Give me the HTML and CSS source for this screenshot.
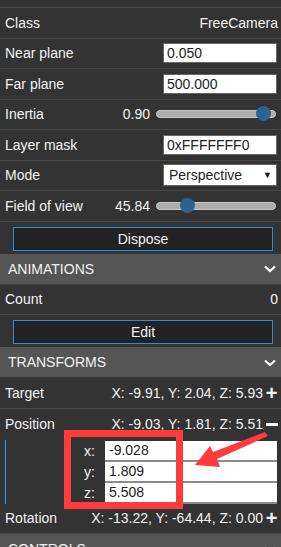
FILE: index.html
```html
<!DOCTYPE html>
<html lang="en">
<head>
  <meta charset="UTF-8">
  <title>Camera Inspector</title>
  <link rel="stylesheet" href="styles.css">
</head>
<body>
  <div class="pane">
    <div class="row top-strip"></div>

    <div class="row">
      <span class="label">Class</span>
      <span class="value">FreeCamera</span>
    </div>
    <div class="row">
      <span class="label">Near plane</span>
      <input class="text-input" type="text" value="0.050">
    </div>
    <div class="row">
      <span class="label">Far plane</span>
      <input class="text-input" type="text" value="500.000">
    </div>
    <div class="row">
      <span class="label">Inertia</span>
      <div class="slider-group">
        <span class="slider-value">0.90</span>
        <div class="slider"><div class="thumb" style="left:90%"></div></div>
      </div>
    </div>
    <div class="row">
      <span class="label">Layer mask</span>
      <input class="text-input" type="text" value="0xFFFFFFF0">
    </div>
    <div class="row">
      <span class="label">Mode</span>
      <div class="select">Perspective <span class="caret">&#9660;</span></div>
    </div>
    <div class="row">
      <span class="label">Field of view</span>
      <div class="slider-group">
        <span class="slider-value">45.84</span>
        <div class="slider"><div class="thumb" style="left:25.5%"></div></div>
      </div>
    </div>
    <div class="button-row">
      <div class="btn">Dispose</div>
    </div>

    <div class="header">
      <span>ANIMATIONS</span>
      <svg class="chevron" viewBox="0 0 12 8" width="12" height="8"><path d="M1 1.5 L6 6 L11 1.5" fill="none" stroke="#fff" stroke-width="2.2"/></svg>
    </div>
    <div class="row">
      <span class="label">Count</span>
      <span class="value">0</span>
    </div>
    <div class="button-row">
      <div class="btn">Edit</div>
    </div>

    <div class="header">
      <span>TRANSFORMS</span>
      <svg class="chevron" viewBox="0 0 12 8" width="12" height="8"><path d="M1 1.5 L6 6 L11 1.5" fill="none" stroke="#fff" stroke-width="2.2"/></svg>
    </div>
    <div class="row vec-row">
      <span class="label">Target</span>
      <span class="vec">X: -9.91, Y: 2.04, Z: 5.93 <span class="sign">+</span></span>
    </div>
    <div class="row vec-row open">
      <span class="label">Position</span>
      <span class="vec">X: -9.03, Y: 1.81, Z: 5.51 <span class="sign minus"></span></span>
    </div>
    <div class="vec-edit">
      <div class="coord"><span class="axis">x:</span><input class="coord-input" type="text" value="-9.028"></div>
      <div class="coord"><span class="axis">y:</span><input class="coord-input" type="text" value="1.809"></div>
      <div class="coord"><span class="axis">z:</span><input class="coord-input" type="text" value="5.508"></div>
      <div class="highlight"></div>
      <!-- annotation arrow, drawn in page coords offset by (0, 400) -->
      <svg class="arrow" viewBox="0 0 281 100" width="281" height="100">
        <polygon points="195,63 210,44 213,50 265,30 268,34 217,57 220,65" fill="#ff3b3b"/>
      </svg>
    </div>
    <div class="row vec-row">
      <span class="label">Rotation</span>
      <span class="vec">X: -13.22, Y: -64.44, Z: 0.00 <span class="sign">+</span></span>
    </div>

    <div class="header">
      <span>CONTROLS</span>
      <svg class="chevron" viewBox="0 0 12 8" width="12" height="8"><path d="M1 1.5 L6 6 L11 1.5" fill="none" stroke="#fff" stroke-width="2.2"/></svg>
    </div>
  </div>
</body>
</html>
```

FILE: styles.css
```css
body {
  margin: 0;
  background: #333;
  font-family: "Liberation Sans", Arial, sans-serif;
  font-size: 14px;
  color: #f2f2f2;
  overflow: hidden;
}

.pane {
  width: 281px;
  background: #333;
}

.row {
  display: flex;
  align-items: center;
  justify-content: space-between;
  height: 29.5px;
  padding: 0 3px 0 5px;
  border-bottom: 1px solid #484848;
}

.top-strip {
  height: 7px;
}

.text-input {
  width: 114px;
  height: 20px;
  box-sizing: border-box;
  margin-right: 1px;
  padding: 0 3px;
  border: 1px solid #666;
  background: #fff;
  color: #222;
  font-family: inherit;
  font-size: 14px;
}

.slider-group {
  display: flex;
  align-items: center;
  gap: 6px;
}

.slider {
  position: relative;
  width: 118px;
  height: 6px;
  margin-right: 2px;
  background: #adadad;
  border: 1px solid #c8c8c8;
  border-radius: 4px;
}

.thumb {
  position: absolute;
  top: -5px;
  width: 15px;
  height: 15px;
  margin-left: -7px;
  border-radius: 50%;
  background: #2e628f;
}

.select {
  display: flex;
  justify-content: space-between;
  align-items: center;
  width: 114px;
  height: 22px;
  box-sizing: border-box;
  margin-right: 1px;
  padding: 0 4px 0 5px;
  background: #fff;
  border: 1px solid #666;
  color: #222;
}

.caret {
  font-size: 9px;
  color: #111;
}

.button-row {
  padding: 5px 8px 3px 13px;
  height: 24px;
}

.btn {
  height: 24px;
  box-sizing: border-box;
  border: 1px solid #2a8de0;
  background: #222;
  color: #f2f2f2;
  display: flex;
  align-items: center;
  justify-content: center;
}

.header {
  display: flex;
  align-items: center;
  justify-content: space-between;
  height: 30px;
  padding: 0 5px 0 8px;
  background: #555;
  border-bottom: 1px solid #3a3a3a;
}

.chevron {
  margin-top: 1px;
}

.vec {
  display: flex;
  align-items: center;
  gap: 2px;
}

.sign {
  width: 13px;
  font-size: 20px;
  font-weight: bold;
  line-height: 14px;
  text-align: center;
}

.minus::before {
  content: "";
  display: block;
  width: 12px;
  height: 3px;
  margin-left: 1px;
  background: #f2f2f2;
}

.open {
  border-bottom: none;
  height: 31px;
}

.vec-edit {
  position: relative;
  margin: 0 4px 0 5px;
  padding-top: 1px;
  border-left: 1px solid #3a9ad9;
}

.coord {
  display: flex;
  align-items: center;
  height: 21px;
}

.axis {
  flex: 0 0 auto;
  width: 89px;
  text-align: right;
  padding-right: 10px;
}

.coord-input {
  flex: 1 1 auto;
  min-width: 0;
  height: 21px;
  box-sizing: border-box;
  padding: 0 4px;
  border: none;
  border-bottom: 2px solid #8a8a8a;
  background: #fff;
  color: #222;
  font-family: inherit;
  font-size: 14px;
}

.coord:last-of-type .coord-input {
  border-bottom: none;
}

.highlight {
  position: absolute;
  left: 58px;
  top: -10px;
  width: 105px;
  height: 65px;
  border: 7px solid #ff3b3b;
}

.arrow {
  position: absolute;
  left: -6px;
  top: -38px;
}
```
